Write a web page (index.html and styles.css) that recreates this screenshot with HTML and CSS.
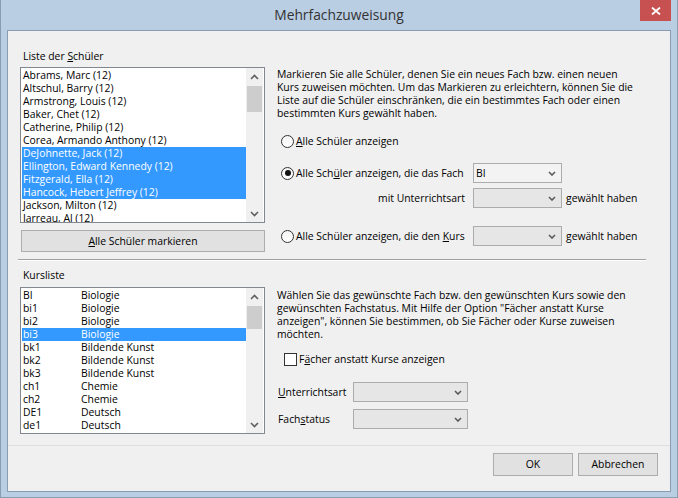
FILE: index.html
```html
<!DOCTYPE html>
<html lang="de">
<head>
<meta charset="utf-8">
<title>Mehrfachzuweisung</title>
<link rel="stylesheet" href="styles.css">
</head>
<body>
<div class="window">
  <div class="titlebar">
    <span></span>
    <span class="title">Mehrfachzuweisung</span>
    <div class="close"><svg width="10" height="8" viewBox="0 0 10 8"><path d="M1 0.5 L9 7.5 M9 0.5 L1 7.5" stroke="#fff" stroke-width="1.8" fill="none"/></svg></div>
  </div>
  <div class="client">
    <section class="sect top">
      <div class="left">
        <div class="label first">Liste der <u>S</u>chüler</div>
        <div class="listbox students">
          <div class="rows">
            <div class="row">Abrams, Marc (12)</div>
            <div class="row">Altschul, Barry (12)</div>
            <div class="row">Armstrong, Louis (12)</div>
            <div class="row">Baker, Chet (12)</div>
            <div class="row">Catherine, Philip (12)</div>
            <div class="row">Corea, Armando Anthony (12)</div>
            <div class="row sel">DeJohnette, Jack (12)</div>
            <div class="row sel">Ellington, Edward Kennedy (12)</div>
            <div class="row sel">Fitzgerald, Ella (12)</div>
            <div class="row sel">Hancock, Hebert Jeffrey (12)</div>
            <div class="row">Jackson, Milton (12)</div>
            <div class="row">Jarreau, Al (12)</div>
          </div>
          <div class="vscroll">
            <div class="arrow"><svg width="9" height="6" viewBox="0 0 9 6"><polyline points="1,5 4.5,1.5 8,5" stroke="#606060" stroke-width="1.6" fill="none"/></svg></div>
            <div class="track"><div class="thumb t1"></div></div>
            <div class="arrow"><svg width="9" height="6" viewBox="0 0 9 6"><polyline points="1,1 4.5,4.5 8,1" stroke="#606060" stroke-width="1.6" fill="none"/></svg></div>
          </div>
        </div>
        <button class="btn wide"><u>A</u>lle Schüler markieren</button>
      </div>
      <div class="right">
        <p class="info first-info">Markieren Sie alle Schüler, denen Sie ein neues Fach bzw. einen neuen<br>Kurs zuweisen möchten. Um das Markieren zu erleichtern, können Sie die<br>Liste auf die Schüler einschränken, die ein bestimmtes Fach oder einen<br>bestimmten Kurs gewählt haben.</p>
        <div class="opt-row r1">
          <div class="opt-label"><span class="radio"></span><span><u>A</u>lle Schüler anzeigen</span></div>
        </div>
        <div class="opt-row r2">
          <div class="opt-label"><span class="radio on"></span><span>Alle Sch<u>ü</u>ler anzeigen, die das Fach</span></div>
          <div class="combo light"><span class="val">BI</span><svg width="8" height="5" viewBox="0 0 8 5"><polyline points="1,1 4,4 7,1" stroke="#5a5a5a" stroke-width="1.6" fill="none"/></svg></div>
        </div>
        <div class="opt-row r3">
          <div class="sublabel">mit Unterrichtsart</div>
          <div class="combo"><span class="val"></span><svg width="8" height="5" viewBox="0 0 8 5"><polyline points="1,1 4,4 7,1" stroke="#5a5a5a" stroke-width="1.6" fill="none"/></svg></div>
          <span class="after">gewählt haben</span>
        </div>
        <div class="opt-row r4">
          <div class="opt-label"><span class="radio"></span><span>Alle Schüler anzeigen, die den <u>K</u>urs</span></div>
          <div class="combo"><span class="val"></span><svg width="8" height="5" viewBox="0 0 8 5"><polyline points="1,1 4,4 7,1" stroke="#5a5a5a" stroke-width="1.6" fill="none"/></svg></div>
          <span class="after">gewählt haben</span>
        </div>
      </div>
    </section>
    <div class="sep"></div>
    <section class="sect bottom">
      <div class="left">
        <div class="label second">Kursliste</div>
        <div class="listbox courses">
          <div class="rows">
            <div class="row"><span class="code">BI</span><span>Biologie</span></div>
            <div class="row"><span class="code">bi1</span><span>Biologie</span></div>
            <div class="row"><span class="code">bi2</span><span>Biologie</span></div>
            <div class="row sel"><span class="code">bi3</span><span>Biologie</span></div>
            <div class="row"><span class="code">bk1</span><span>Bildende Kunst</span></div>
            <div class="row"><span class="code">bk2</span><span>Bildende Kunst</span></div>
            <div class="row"><span class="code">bk3</span><span>Bildende Kunst</span></div>
            <div class="row"><span class="code">ch1</span><span>Chemie</span></div>
            <div class="row"><span class="code">ch2</span><span>Chemie</span></div>
            <div class="row"><span class="code">DE1</span><span>Deutsch</span></div>
            <div class="row"><span class="code">de1</span><span>Deutsch</span></div>
          </div>
          <div class="vscroll">
            <div class="arrow"><svg width="9" height="6" viewBox="0 0 9 6"><polyline points="1,5 4.5,1.5 8,5" stroke="#606060" stroke-width="1.6" fill="none"/></svg></div>
            <div class="track"><div class="thumb t2"></div></div>
            <div class="arrow"><svg width="9" height="6" viewBox="0 0 9 6"><polyline points="1,1 4.5,4.5 8,1" stroke="#606060" stroke-width="1.6" fill="none"/></svg></div>
          </div>
        </div>
      </div>
      <div class="right">
        <p class="info second-info">Wählen Sie das gewünschte Fach bzw. den gewünschten Kurs sowie den<br>gewünschten Fachstatus. Mit Hilfe der Option "Fächer anstatt Kurse<br>anzeigen", können Sie bestimmen, ob Sie Fächer oder Kurse zuweisen<br>möchten.</p>
        <div class="check-row"><span class="checkbox"></span><span>F<u>ä</u>cher anstatt Kurse anzeigen</span></div>
        <div class="form-row f1">
          <span class="form-label"><u>U</u>nterrichtsart</span>
          <div class="combo wide-combo"><span class="val"></span><svg width="8" height="5" viewBox="0 0 8 5"><polyline points="1,1 4,4 7,1" stroke="#5a5a5a" stroke-width="1.6" fill="none"/></svg></div>
        </div>
        <div class="form-row f2">
          <span class="form-label">Fach<u>s</u>tatus</span>
          <div class="combo wide-combo"><span class="val"></span><svg width="8" height="5" viewBox="0 0 8 5"><polyline points="1,1 4,4 7,1" stroke="#5a5a5a" stroke-width="1.6" fill="none"/></svg></div>
        </div>
      </div>
    </section>
    <div class="footer">
      <button class="btn dlg">OK</button>
      <button class="btn dlg">Abbrechen</button>
    </div>
  </div>
</div>
</body>
</html>
```
FILE: styles.css
```css
* { box-sizing: border-box; }
html, body { margin: 0; padding: 0; }
body {
  width: 678px;
  height: 498px;
  overflow: hidden;
  font-family: "Open Sans", "Liberation Sans", sans-serif;
  font-size: 10.4px;
  line-height: 13px;
  color: #000;
}
u { text-decoration: underline; text-underline-offset: 1px; }

.window {
  width: 678px;
  height: 498px;
  background: #b9cde3;
  border: 1px solid #8a9cb2;
  border-top: none;
  display: flex;
  flex-direction: column;
}
.titlebar {
  height: 30px;
  flex: none;
  display: grid;
  grid-template-columns: 1fr auto 1fr;
  align-items: start;
  padding: 0 6px;
}
.title {
  font-size: 13.8px;
  line-height: 30px;
  color: #333;
}
.close {
  justify-self: end;
  width: 31px;
  height: 21px;
  background: #c75050;
  display: flex;
  align-items: center;
  justify-content: center;
}
.client {
  margin: 0 6px;
  height: 462px;
  flex: none;
  border: 1px solid #8a9cb2;
  background: #f0f0f0;
  display: flex;
  flex-direction: column;
}

.sect { display: flex; flex: none; }
.top { height: 228px; }
.bottom { height: 184px; }

.left {
  margin-left: 12px;
  width: 245px;
  display: flex;
  flex-direction: column;
}
.label { margin-left: 3px; height: 13px; }
.label.first { margin-top: 19px; }
.label.second { margin-top: 8px; }

.listbox {
  border: 1px solid #828790;
  background: #fff;
  display: flex;
  overflow: hidden;
}
.students { margin-top: 4px; height: 156px; }
.courses { margin-top: 5px; height: 147px; }
.rows {
  width: 225px;
  padding: 1px 0 0 1px;
  overflow: hidden;
}
.row {
  height: 13px;
  padding-left: 1px;
  white-space: nowrap;
  display: flex;
}
.row.sel { background: #3399ff; color: #fff; }
.code { width: 58px; flex: none; }

.vscroll {
  width: 17px;
  margin-right: 1px;
  background: #f0f0f0;
  display: flex;
  flex-direction: column;
}
.arrow {
  height: 17px;
  flex: none;
  display: flex;
  align-items: center;
  justify-content: center;
}
.track { flex: 1; }
.thumb {
  margin: 1px 1px 0 1px;
  background: #cdcdcd;
}
.t1 { height: 26px; }
.t2 { height: 23px; }

.btn {
  font: inherit;
  color: #000;
  border: 1px solid #adadad;
  background: #e1e1e1;
  padding: 0;
  text-align: center;
}
.btn.wide {
  margin-top: 7px;
  margin-left: 1px;
  width: 244px;
  height: 22px;
  line-height: 20px;
}

.right {
  margin-left: 12px;
  flex: 1;
  display: flex;
  flex-direction: column;
}
.info { margin: 0; white-space: nowrap; }
.first-info { margin-top: 37px; }
.second-info { margin-top: 28px; }

.opt-row {
  display: flex;
  align-items: center;
  height: 20px;
  white-space: nowrap;
}
.r1 { margin-top: 11px; }
.r2 { margin-top: 12px; }
.r3 { margin-top: 5px; }
.r4 { margin-top: 18px; }
.opt-label {
  width: 196px;
  flex: none;
  display: flex;
  align-items: center;
}
.radio {
  margin-left: 4px;
  margin-right: 2px;
  width: 13px;
  height: 13px;
  flex: none;
  border: 1px solid #333;
  border-radius: 50%;
  background: linear-gradient(#f4f4f4, #fff);
  display: flex;
  align-items: center;
  justify-content: center;
}
.radio.on::after {
  content: "";
  width: 6px;
  height: 6px;
  border-radius: 50%;
  background: #111;
}
.sublabel {
  width: 196px;
  flex: none;
  text-align: right;
  padding-right: 8px;
}
.combo {
  width: 89px;
  height: 20px;
  flex: none;
  border: 1px solid #acacac;
  background: #e6e6e6;
  display: flex;
  align-items: center;
  justify-content: space-between;
  padding: 0 5px 0 2px;
}
.combo.light { background: #f3f3f3; }
.after { margin-left: 4px; }

.sep {
  margin-left: 10px;
  width: 628px;
  height: 2px;
  flex: none;
  border-top: 1px solid #a0a0a0;
  border-bottom: 1px solid #fff;
}

.check-row {
  margin-top: 12px;
  height: 13px;
  display: flex;
  align-items: center;
  white-space: nowrap;
}
.checkbox {
  margin-left: 7px;
  margin-right: 2px;
  width: 13px;
  height: 13px;
  flex: none;
  border: 1px solid #333;
  background: #fff;
}
.form-row {
  display: flex;
  align-items: center;
  height: 20px;
}
.f1 { margin-top: 16px; }
.f2 { margin-top: 7px; }
.form-label { width: 76px; flex: none; padding-left: 1px; }
.wide-combo { width: 115px; }

.footer {
  height: 46px;
  flex: none;
  border-top: 1px solid #dfdfdf;
  display: flex;
  justify-content: flex-end;
  gap: 5px;
  padding: 7px 12px 0 0;
}
.btn.dlg {
  width: 80px;
  height: 23px;
  line-height: 21px;
}
```
